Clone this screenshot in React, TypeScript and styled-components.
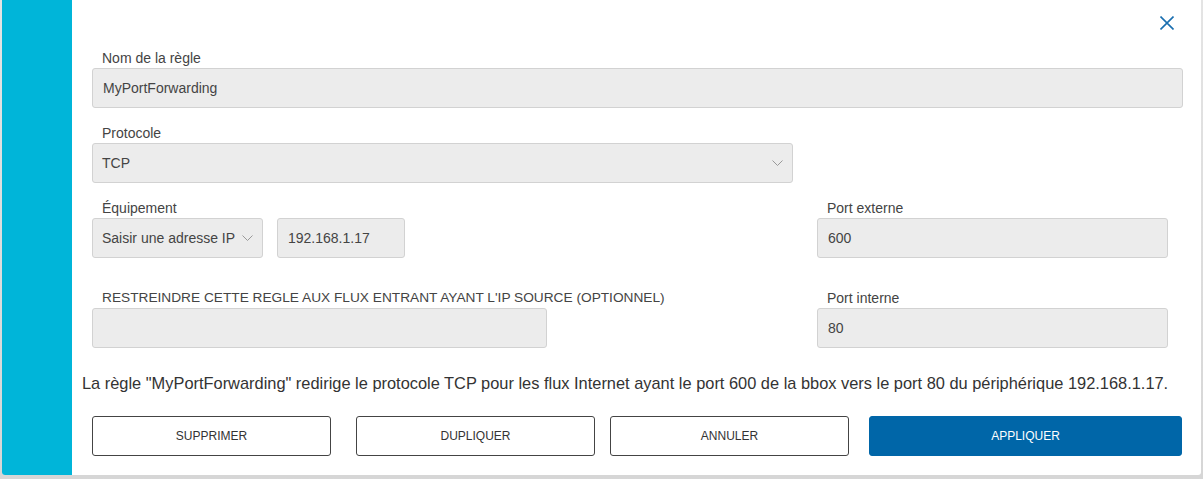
import React from 'react';
import styled, { createGlobalStyle } from 'styled-components';

const GlobalStyle = createGlobalStyle`
  html, body {
    margin: 0;
    padding: 0;
    background: #ffffff;
    font-family: "Liberation Sans", Arial, sans-serif;
  }
`;

const Page = styled.div`
  width: 1203px;
  height: 479px;
  box-sizing: border-box;
  padding: 0 2px 4px 2px;
  background: linear-gradient(#e4e4e4, #d6d6d6);
`;

const Card = styled.div`
  display: flex;
  height: 100%;
  background: #ffffff;
  border-radius: 0 0 3px 3px;
  overflow: hidden;
`;

const SideBar = styled.div`
  width: 70px;
  flex-shrink: 0;
  background: #00b5d9;
`;

const Content = styled.div`
  flex: 1;
  padding: 0 18px 0 10px;
  display: flex;
  flex-direction: column;
`;

const Header = styled.div`
  height: 48px;
  display: flex;
  justify-content: flex-end;
  align-items: flex-start;
  padding: 16px 9px 0 0;
  box-sizing: border-box;
`;

const CloseButton = styled.button`
  width: 14px;
  height: 14px;
  padding: 0;
  border: none;
  background: none;
  cursor: pointer;
  display: flex;
`;

const Form = styled.div`
  padding-left: 10px;
  display: flex;
  flex-direction: column;
`;

const Field = styled.div<{ $top?: number; $width?: string }>`
  display: flex;
  flex-direction: column;
  margin-top: ${p => p.$top ?? 0}px;
  width: ${p => p.$width ?? 'auto'};
`;

const Label = styled.label<{ $size?: number }>`
  font-size: ${p => p.$size ?? 14}px;
  line-height: 20px;
  color: #444;
  padding-left: 10px;
  white-space: nowrap;
`;

const Input = styled.div<{ $width?: string }>`
  box-sizing: border-box;
  height: 40px;
  width: ${p => p.$width ?? '100%'};
  background: #ececec;
  border: 1px solid #d2d2d2;
  border-radius: 3px;
  padding: 0 10px;
  display: flex;
  align-items: center;
  font-size: 14px;
  color: #444;
`;

const Select = styled(Input)`
  justify-content: space-between;
  padding: 0 9px;
`;

const Columns = styled.div<{ $top: number }>`
  display: flex;
  justify-content: space-between;
  margin-top: ${p => p.$top}px;
  padding-right: 15px;
`;

const Inline = styled.div`
  display: flex;
  gap: 14px;
`;

const Summary = styled.p`
  margin: 24px 0 0;
  font-size: 16.4px;
  line-height: 22px;
  color: #333;
  white-space: nowrap;
`;

const Actions = styled.div`
  display: flex;
  margin: 22px 0 0 10px;
`;

const Button = styled.button<{ $primary?: boolean; $width: number; $gap: number }>`
  box-sizing: border-box;
  height: 40px;
  width: ${p => p.$width}px;
  margin-left: ${p => p.$gap}px;
  border-radius: 3px;
  border: 1px solid ${p => (p.$primary ? '#0066a8' : '#444')};
  background: ${p => (p.$primary ? '#0066a8' : '#fff')};
  color: ${p => (p.$primary ? '#fff' : '#333')};
  font-family: "Liberation Sans", Arial, sans-serif;
  font-size: 12px;
  cursor: pointer;
`;

const Chevron = () => (
  <svg width="11" height="6" viewBox="0 0 11 6" fill="none">
    <path d="M0.5 0.5 L5.5 5.5 L10.5 0.5" stroke="#999" strokeWidth="1" />
  </svg>
);

export default function App() {
  return (
    <>
      <GlobalStyle />
      <Page>
        <Card>
          <SideBar />
          <Content>
            <Header>
              <CloseButton aria-label="Fermer">
                <svg width="14" height="14" viewBox="0 0 14 14">
                  <path d="M0.5 0.5 L13.5 13.5 M13.5 0.5 L0.5 13.5" stroke="#1a6fb0" strokeWidth="1.6" />
                </svg>
              </CloseButton>
            </Header>
            <Form>
              <Field>
                <Label>Nom de la règle</Label>
                <Input>MyPortForwarding</Input>
              </Field>
              <Field $top={15} $width="701px">
                <Label>Protocole</Label>
                <Select>
                  <span>TCP</span>
                  <Chevron />
                </Select>
              </Field>
              <Columns $top={15}>
                <Field>
                  <Label>Équipement</Label>
                  <Inline>
                    <Select $width="171px">
                      <span>Saisir une adresse IP</span>
                      <Chevron />
                    </Select>
                    <Input $width="128px">192.168.1.17</Input>
                  </Inline>
                </Field>
                <Field $width="351px">
                  <Label>Port externe</Label>
                  <Input>600</Input>
                </Field>
              </Columns>
              <Columns $top={30}>
                <Field $width="455px">
                  <Label $size={13.7}>RESTREINDRE CETTE REGLE AUX FLUX ENTRANT AYANT L'IP SOURCE (OPTIONNEL)</Label>
                  <Input />
                </Field>
                <Field $width="351px">
                  <Label>Port interne</Label>
                  <Input>80</Input>
                </Field>
              </Columns>
            </Form>
            <Summary>
              La règle "MyPortForwarding" redirige le protocole TCP pour les flux Internet ayant le port 600 de la bbox vers le port 80 du périphérique 192.168.1.17.
            </Summary>
            <Actions>
              <Button $width={239} $gap={0}>SUPPRIMER</Button>
              <Button $width={239} $gap={25}>DUPLIQUER</Button>
              <Button $width={239} $gap={15}>ANNULER</Button>
              <Button $width={313} $gap={20} $primary>APPLIQUER</Button>
            </Actions>
          </Content>
        </Card>
      </Page>
    </>
  );
}
